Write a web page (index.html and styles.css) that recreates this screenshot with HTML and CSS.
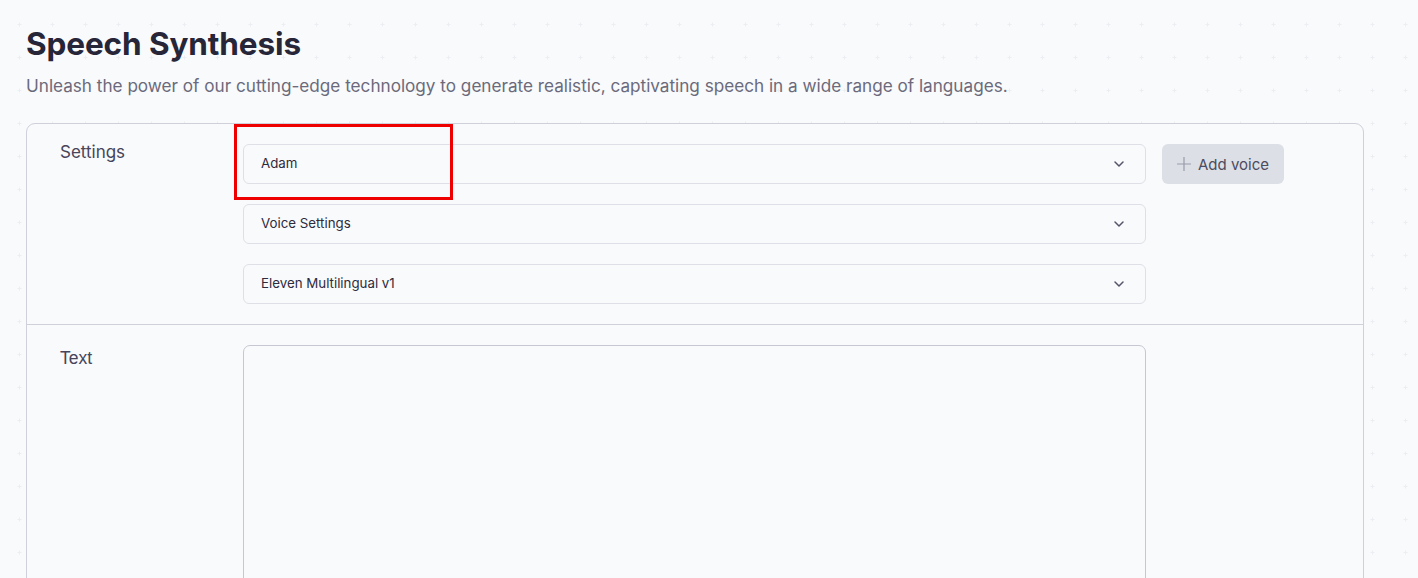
FILE: index.html
```html
<!DOCTYPE html>
<html lang="en">
<head>
    <meta charset="UTF-8">
    <meta name="viewport" content="width=device-width, initial-scale=1.0">
    <title>Speech Synthesis</title>
    <link rel="stylesheet" href="styles.css">
</head>
<body>
    <div class="page">
        <header class="page-header">
            <h1 class="page-title">Speech Synthesis</h1>
            <p class="page-subtitle">Unleash the power of our cutting-edge technology to generate realistic, captivating speech in a wide range of languages.</p>
        </header>

        <div class="card">
            <section class="card-row">
                <div class="row-label">Settings</div>
                <div class="row-fields">
                    <div class="field-line">
                        <div class="select">
                            <span>Adam</span>
                            <svg class="chevron" viewBox="0 0 12 12" width="12" height="12"><path d="M2 4l4 4 4-4" /></svg>
                        </div>
                        <button class="add-btn">
                            <svg class="plus" viewBox="0 0 16 16" width="16" height="16"><path d="M8 1v14M1 8h14" /></svg>
                            Add voice
                        </button>
                    </div>
                    <div class="field-line">
                        <div class="select">
                            <span>Voice Settings</span>
                            <svg class="chevron" viewBox="0 0 12 12" width="12" height="12"><path d="M2 4l4 4 4-4" /></svg>
                        </div>
                    </div>
                    <div class="field-line">
                        <div class="select">
                            <span>Eleven Multilingual v1</span>
                            <svg class="chevron" viewBox="0 0 12 12" width="12" height="12"><path d="M2 4l4 4 4-4" /></svg>
                        </div>
                    </div>
                </div>
            </section>

            <section class="card-row text-row">
                <div class="row-label text-label">Text</div>
                <div class="row-fields">
                    <div class="field-line">
                        <textarea class="text-input"></textarea>
                    </div>
                </div>
            </section>
        </div>
    </div>

    <!-- highlight box drawn over the voice dropdown -->
    <div class="highlight"></div>
</body>
</html>
```

FILE: styles.css
```css
body {
    margin: 0;
    overflow: hidden;
    font-family: Inter, "Noto Sans", sans-serif;
    color: #272538;
    background-color: #f9fafb;
    background-image: url("data:image/svg+xml,%3Csvg xmlns='http://www.w3.org/2000/svg' width='33' height='33'%3E%3Cpath d='M16.5 14.5v4M14.5 16.5h4' stroke='%23eceef2' stroke-width='1'/%3E%3C/svg%3E");
    background-position: 2.5px 7.5px;
    background-size: 33px 33px;
}

.page {
    padding: 25px 54px 0 26px;
}

.page-header {
    margin-bottom: 26px;
}

.page-title {
    margin: 0;
    font-size: 31.5px;
    font-weight: 700;
    line-height: 37px;
    letter-spacing: -0.1px;
    color: #272538;
}

.page-subtitle {
    margin: 13px 0 0;
    font-size: 17.15px;
    line-height: 22px;
    color: #6b6a7c;
}

.card {
    background: #f9fafb;
    border: 1px solid #cfd0da;
    border-radius: 9px;
    height: 600px;
}

.card-row {
    display: flex;
    padding: 20px 0 20px 33px;
}

.text-row {
    border-top: 1px solid #cfd0da;
    padding-bottom: 0;
}

.row-label {
    width: 183px;
    flex-shrink: 0;
    font-size: 17px;
    line-height: 14px;
    color: #47455a;
    padding-top: 1px;
}

.text-label {
    font-family: "Liberation Sans", Arial, sans-serif;
    font-size: 17.5px;
    line-height: 18px;
    padding-top: 4px;
}

.row-fields {
    display: flex;
    flex-direction: column;
    gap: 20px;
}

.field-line {
    display: flex;
    gap: 16px;
}

.select {
    box-sizing: border-box;
    width: 903px;
    height: 40px;
    display: flex;
    align-items: center;
    justify-content: space-between;
    padding: 0 20px 0 17px;
    background: #f9fafb;
    border: 1px solid #dfe0e7;
    border-radius: 6px;
    font-size: 13.3px;
    color: #2d2b3e;
}

.select span {
    margin-top: -3px;
}

.chevron {
    fill: none;
    stroke: #55546a;
    stroke-width: 1.5;
    stroke-linecap: round;
    stroke-linejoin: round;
}

.add-btn {
    box-sizing: border-box;
    width: 122px;
    height: 40px;
    display: flex;
    align-items: center;
    gap: 6px;
    padding: 0 0 0 14px;
    background: #dcdfe5;
    border: none;
    border-radius: 6px;
    font-family: Inter, sans-serif;
    font-size: 15px;
    color: #4d4b5f;
    cursor: pointer;
}

.plus {
    fill: none;
    stroke: #9a9bab;
    stroke-width: 1.2;
}

.text-input {
    box-sizing: border-box;
    width: 903px;
    height: 300px;
    background: #f9fafb;
    border: 1px solid #c6c7d3;
    border-radius: 7px;
    resize: none;
}

.highlight {
    position: absolute;
    left: 234px;
    top: 124px;
    width: 213px;
    height: 70px;
    border: 3px solid #ee0000;
}
```
